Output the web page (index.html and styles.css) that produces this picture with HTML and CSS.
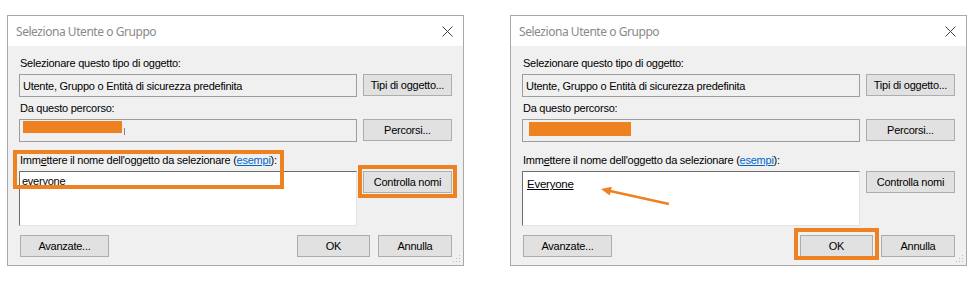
FILE: index.html
```html
<!DOCTYPE html>
<html>

<head>
    <meta name="viewport" content="width=device-width, initial-scale=1.0">
    <link rel="stylesheet" href="styles.css">
</head>

<body>
    <div class="page">

        <!-- prima: nome scritto a mano -->
        <div class="dialog">
            <div class="titlebar">
                <span class="title">Seleziona Utente o Gruppo</span>
                <svg class="close" width="11" height="11" viewBox="0 0 11 11">
                    <path d="M0.5 0.5 L10.5 10.5 M10.5 0.5 L0.5 10.5" stroke="#444" stroke-width="1" fill="none" />
                </svg>
            </div>
            <div class="body">
                <div class="row">
                    <div class="field">
                        <div class="label">Selezionare questo tipo di oggetto:</div>
                        <div class="box">Utente, Gruppo o Entità di sicurezza predefinita</div>
                    </div>
                    <div class="btn">Tipi di oggetto...</div>
                </div>
                <div class="row row2">
                    <div class="field">
                        <div class="label">Da questo percorso:</div>
                        <div class="box"><span class="redact redact-a"></span><span class="peek"></span></div>
                    </div>
                    <div class="btn">Percorsi...</div>
                </div>
                <div class="row row3">
                    <div class="field">
                        <div class="label">Imm<u>e</u>ttere il nome dell'oggetto da selezionare (<a href="#">esempi</a>):</div>
                        <div class="names">everyone</div>
                    </div>
                    <div class="btn btn-top">Controlla nomi</div>
                </div>
                <div class="footer">
                    <div class="btn btn-adv">Avanzate...</div>
                    <div class="spacer"></div>
                    <div class="btn btn-ok">OK</div>
                    <div class="btn btn-cancel">Annulla</div>
                </div>
            </div>
            <div class="grip"></div>
            <div class="mark mark-names"></div>
            <div class="mark mark-check"></div>
        </div>

        <!-- dopo: nome risolto -->
        <div class="dialog">
            <div class="titlebar">
                <span class="title">Seleziona Utente o Gruppo</span>
                <svg class="close" width="11" height="11" viewBox="0 0 11 11">
                    <path d="M0.5 0.5 L10.5 10.5 M10.5 0.5 L0.5 10.5" stroke="#444" stroke-width="1" fill="none" />
                </svg>
            </div>
            <div class="body">
                <div class="row">
                    <div class="field">
                        <div class="label">Selezionare questo tipo di oggetto:</div>
                        <div class="box">Utente, Gruppo o Entità di sicurezza predefinita</div>
                    </div>
                    <div class="btn">Tipi di oggetto...</div>
                </div>
                <div class="row row2">
                    <div class="field">
                        <div class="label">Da questo percorso:</div>
                        <div class="box"><span class="redact redact-b"></span></div>
                    </div>
                    <div class="btn">Percorsi...</div>
                </div>
                <div class="row row3">
                    <div class="field">
                        <div class="label">Imm<u>e</u>ttere il nome dell'oggetto da selezionare (<a href="#">esempi</a>):</div>
                        <div class="names"><u class="resolved">Everyone</u></div>
                    </div>
                    <div class="btn btn-top">Controlla nomi</div>
                </div>
                <div class="footer">
                    <div class="btn btn-adv">Avanzate...</div>
                    <div class="spacer"></div>
                    <div class="btn btn-ok">OK</div>
                    <div class="btn btn-cancel">Annulla</div>
                </div>
            </div>
            <div class="grip"></div>
            <svg class="arrow" width="70" height="20" viewBox="0 0 70 20">
                <line x1="68" y1="17" x2="8" y2="3.8" stroke="#ef8220" stroke-width="2.5" />
                <polygon points="0,2 10.8,-0.2 8.8,8.4" fill="#ef8220" />
            </svg>
            <div class="mark mark-ok"></div>
        </div>

    </div>
</body>

</html>
```

FILE: styles.css
```css
body {
    margin: 0;
    background-color: white;
    font-family: "Liberation Sans", Arial, sans-serif;
    font-size: 11px;
    letter-spacing: -0.25px;
    color: black;
}

.page {
    display: flex;
    gap: 46px;
    padding: 15px 0 0 7px;
}

.dialog {
    position: relative;
    width: 457px;
    height: 251px;
    box-sizing: border-box;
    border: 1px solid #a9a9a9;
    background-color: #f0f0f0;
}

.titlebar {
    height: 30px;
    background-color: white;
    display: flex;
    align-items: center;
    justify-content: space-between;
    padding: 0 10px 0 8px;
}

.title {
    font-family: "Noto Sans", "Open Sans", sans-serif;
    font-size: 12px;
    color: #8a8a8a;
    letter-spacing: -0.45px;
}

.close {
    display: block;
}

.body {
    padding: 10px 11px 0 11px;
}

.row {
    display: flex;
    gap: 6px;
    align-items: flex-end;
}

.row2 {
    margin-top: 4px;
}

.row3 {
    margin-top: 11px;
    align-items: flex-start;
}

.field {
    width: 338px;
}

.label {
    height: 15px;
    line-height: 15px;
    margin-bottom: 3px;
    padding-left: 1px;
    white-space: nowrap;
}

.label a {
    color: #0066cc;
}

.box {
    height: 23px;
    box-sizing: border-box;
    border: 1px solid #9c9c9c;
    line-height: 20px;
    padding-left: 3px;
    white-space: nowrap;
    display: flex;
    align-items: center;
}

.redact {
    display: block;
    background-color: #ef8220;
}

.redact-a {
    width: 99px;
    height: 12px;
    margin-top: -7px;
}

.peek {
    display: block;
    width: 2px;
    height: 7px;
    margin-top: 2px;
    border-right: 1px solid #888;
}

.redact-b {
    width: 102px;
    height: 14px;
    margin-left: 3px;
    margin-top: -4px;
}

.names {
    height: 55px;
    box-sizing: border-box;
    background-color: white;
    border-top: 1px solid #6d6d6d;
    border-left: 1px solid #6d6d6d;
    border-right: 1px solid #e3e3e3;
    border-bottom: 1px solid #e3e3e3;
    padding: 3px 0 0 2px;
    line-height: 13px;
}

.resolved {
    display: inline-block;
    padding-top: 3px;
    padding-left: 2px;
    font-size: 11.5px;
}

.btn {
    width: 89px;
    height: 22px;
    box-sizing: border-box;
    border: 1px solid #adadad;
    background-color: #e1e1e1;
    display: flex;
    align-items: center;
    justify-content: center;
    margin-bottom: 1px;
    white-space: nowrap;
}

.btn-top {
    margin-top: 18px;
}

.footer {
    display: flex;
    margin-top: 9px;
    gap: 8px;
}

.btn-adv {
    margin-left: 1px;
}

.spacer {
    flex: 1;
}

.btn-ok {
    width: 73px;
}

.btn-cancel {
    width: 74px;
}

.grip {
    position: absolute;
    right: 3px;
    bottom: 3px;
    width: 8px;
    height: 8px;
    background-image: radial-gradient(circle, #bcbcbc 0.9px, transparent 1px);
    background-size: 3px 3px;
    clip-path: polygon(100% 0, 100% 100%, 0 100%);
}

/* evidenziazioni arancioni sopra lo screenshot */
.mark {
    position: absolute;
    box-sizing: border-box;
    border: 4px solid #ef8220;
}

.mark-names {
    left: 5px;
    top: 134px;
    width: 271px;
    height: 39px;
}

.mark-check {
    left: 350px;
    top: 149px;
    width: 99px;
    height: 33px;
}

.mark-ok {
    left: 283px;
    top: 212px;
    width: 85px;
    height: 32px;
}

.arrow {
    position: absolute;
    left: 90px;
    top: 171px;
    overflow: visible;
}
```
